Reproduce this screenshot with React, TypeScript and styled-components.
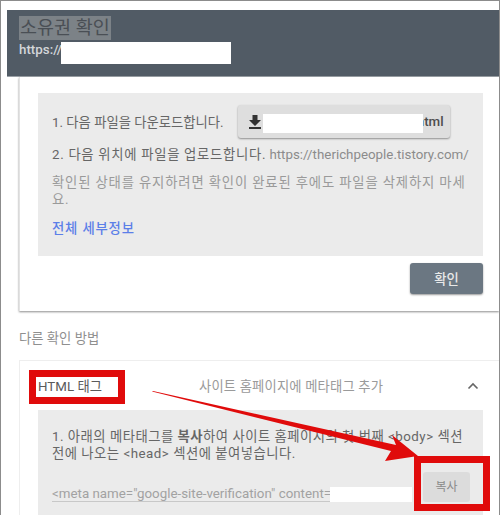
import React from 'react'
import styled, { createGlobalStyle } from 'styled-components'

const GlobalStyle = createGlobalStyle`
  html, body {
    margin: 0;
    padding: 0;
    background: #fff;
  }
  body {
    font-family: Roboto, "Noto Sans CJK KR", "Liberation Sans", sans-serif;
  }
`

const Frame = styled.div`
  position: relative;
  box-sizing: border-box;
  width: 500px;
  height: 515px;
  padding: 9px 0 0 6px;
  border: 1px solid #8c8c8c;
  border-bottom: 0;
  background: #fff;
  overflow: hidden;
`

const Header = styled.header`
  box-sizing: border-box;
  height: 67px;
  padding: 6px 12px;
  background: #515b65;
  border-bottom: 1px solid #9aa0a6;
`

const Title = styled.h1`
  display: inline-block;
  margin: 0;
  padding: 0 1px;
  font-size: 18.5px;
  line-height: 24px;
  font-weight: 400;
  color: #4a4f55;
  background: #7c8287;
`

const Url = styled.div`
  font-size: 13.33px;
  line-height: 18px;
  margin-top: 1px;
  font-weight: 500;
  color: #d3d6d9;
`

const Card = styled.section`
  box-sizing: border-box;
  height: 234px;
  margin-left: 12px;
  padding: 16px 16px 0 18px;
  background: #fff;
  border-left: 1px solid #e3e3e3;
  box-shadow: 0 1px 2px rgba(0, 0, 0, 0.45);
`

const Instructions = styled.div`
  box-sizing: border-box;
  height: 163px;
  padding: 12px 12px 0 14px;
  background: #ebebeb;
  color: #666;
  font-size: 13.33px;
`

const DownloadRow = styled.div`
  display: flex;
  align-items: center;
  gap: 14px;
`

const DownloadButton = styled.div`
  display: flex;
  align-items: center;
  justify-content: space-between;
  box-sizing: border-box;
  width: 212px;
  height: 33px;
  padding: 0 6px 0 11px;
  border-radius: 3px;
  background: #dedede;
  box-shadow: 0 1px 2px rgba(0, 0, 0, 0.4);
  color: #4d4d4d;
  font-weight: 500;
`

const Step = styled.p`
  margin: 7px 0 0;
  line-height: 20px;
  white-space: nowrap;
`

const StepLead = styled.span`
  letter-spacing: 0.7px;
`

const Muted = styled.span`
  color: #8b8b8b;
`

const Note = styled.p`
  margin: 9px 0 0;
  line-height: 17px;
  letter-spacing: 0.85px;
  color: #9a9a9a;
`

const MoreLink = styled.a`
  display: block;
  margin-top: 10px;
  letter-spacing: 0.85px;
  color: #5c7fe8;
  font-weight: 500;
`

const ActionRow = styled.div`
  display: flex;
  justify-content: flex-end;
  margin-top: 7px;
`

const VerifyButton = styled.div`
  display: flex;
  align-items: center;
  justify-content: center;
  width: 73px;
  height: 31px;
  border-radius: 3px;
  background: #6b7782;
  box-shadow: 0 1px 2px rgba(0, 0, 0, 0.4);
  color: #e8e8e8;
  font-size: 13.33px;
  font-weight: 500;
`

const SectionLabel = styled.div`
  margin: 19px 0 0 12px;
  font-size: 13.33px;
  line-height: 18px;
  color: #8f8f8f;
`

const Panel = styled.section`
  box-sizing: border-box;
  height: 170px;
  margin: 12px 0 0 12px;
  padding-left: 18px;
  padding-right: 16px;
  border-left: 1px solid #eee;
  border-top: 1px solid #eee;
`

const PanelHead = styled.div`
  display: grid;
  grid-template-columns: 161px 1fr 24px;
  align-items: center;
  height: 49px;
  font-size: 13.33px;
  color: #9a9a9a;
`

const MethodName = styled.span`
  color: #5a5a5a;
`

const Summary = styled.span`
  letter-spacing: 0.15px;
`

const Chevron = styled.svg`
  justify-self: end;
  margin-right: 3px;
`

const PanelBody = styled.div`
  box-sizing: border-box;
  height: 130px;
  padding: 18px 12px 0 14px;
  background: #ebebeb;
  color: #666;
  font-size: 13.33px;
  line-height: 17px;
`

const CopyText = styled.p`
  margin: 0;
  letter-spacing: 0.5px;
  white-space: pre-line;
`

const CodeRow = styled.div`
  display: flex;
  align-items: flex-end;
  margin-top: 10px;
  gap: 11px;
`

const CodeField = styled.div`
  width: 360px;
  line-height: 15px;
  color: #a2a2a2;
  border-bottom: 1px solid #c8c8c8;
  white-space: nowrap;
  overflow: hidden;
`

const CopyButton = styled.div`
  display: flex;
  align-items: center;
  justify-content: center;
  flex: none;
  width: 47px;
  height: 30px;
  border-radius: 3px;
  background: #dcdcdc;
  color: #8a8a8a;
  font-size: 12px;
`

const Redaction = styled.div<{ $x: number; $y: number; $w: number; $h: number }>`
  position: absolute;
  left: ${p => p.$x - 1}px;
  top: ${p => p.$y - 1}px;
  width: ${p => p.$w}px;
  height: ${p => p.$h}px;
  background: #fff;
`

const RedBox = styled.div<{ $x: number; $y: number; $w: number; $h: number }>`
  position: absolute;
  box-sizing: border-box;
  left: ${p => p.$x - 1}px;
  top: ${p => p.$y - 1}px;
  width: ${p => p.$w}px;
  height: ${p => p.$h}px;
  border: 7px solid #e00b0b;
`

const Arrow = styled.svg`
  position: absolute;
  left: -1px;
  top: -1px;
  pointer-events: none;
`

export default function App() {
  return (
    <>
      <GlobalStyle />
      <Frame>
        <Header>
          <Title>소유권 확인</Title>
          <Url>https://</Url>
        </Header>
        <Card>
          <Instructions>
            <DownloadRow>
              <span>1. 다음 파일을 다운로드합니다.</span>
              <DownloadButton>
                <svg width="12" height="14" viewBox="0 0 12 14">
                  <path d="M3.500 0h5v5H12L6 11 0 5h3.500z M0 12h12v2H0z" fill="#333" />
                </svg>
                <span>html</span>
              </DownloadButton>
            </DownloadRow>
            <Step>
              <StepLead>2. 다음 위치에 파일을 업로드합니다.</StepLead> <Muted>https://therichpeople.tistory.com/</Muted>
            </Step>
            <Note>확인된 상태를 유지하려면 확인이 완료된 후에도 파일을 삭제하지 마세요.</Note>
            <MoreLink>전체 세부정보</MoreLink>
          </Instructions>
          <ActionRow>
            <VerifyButton>확인</VerifyButton>
          </ActionRow>
        </Card>
        <SectionLabel>다른 확인 방법</SectionLabel>
        <Panel>
          <PanelHead>
            <MethodName>HTML 태그</MethodName>
            <Summary>사이트 홈페이지에 메타태그 추가</Summary>
            <Chevron width="14" height="14" viewBox="0 0 14 14">
              <path d="M2.500 9.500 7 5l4.500 4.500" fill="none" stroke="#666" strokeWidth="1.600" />
            </Chevron>
          </PanelHead>
          <PanelBody>
            <CopyText>
              1. 아래의 메타태그를 <b>복사</b>하여 사이트 홈페이지의 첫 번째 &lt;body&gt; 섹션{'\n'}
              전에 나오는 &lt;head&gt; 섹션에 붙여넣습니다.
            </CopyText>
            <CodeRow>
              <CodeField>&lt;meta name="google-site-verification" content=</CodeField>
              <CopyButton>복사</CopyButton>
            </CodeRow>
          </PanelBody>
        </Panel>

        <Redaction $x={61} $y={42} $w={170} $h={22} />
        <Redaction $x={263} $y={114} $w={160} $h={19} />
        <Redaction $x={330} $y={487} $w={82} $h={15} />
        <RedBox $x={29} $y={370} $w={96} $h={34} />
        <RedBox $x={414} $y={456} $w={76} $h={55} />
        <Arrow width="500" height="515" viewBox="0 0 500 515">
          <polygon points="152,391.500 153,391 396,445 392,435 418,456 385,461 391,451" fill="#e00b0b" />
        </Arrow>
      </Frame>
    </>
  )
}
